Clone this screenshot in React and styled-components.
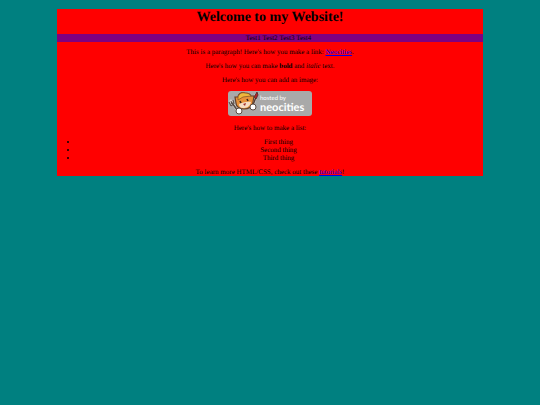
import React from 'react';
import styled, { createGlobalStyle } from 'styled-components';

const things = ['First thing', 'Second thing', 'Third thing'];
const tests = ['Test1', 'Test2', 'Test3', 'Test4'];

const NeocitiesBadge = () => {
  return (
    <Badge viewBox='0 0 84 25' role='img' aria-label='hosted by neocities'>
      <rect width='84' height='25' rx='3' fill='#a9a9a9' />
      {/* fork */}
      <path d='M3 10 L10 20' stroke='#d8d4d0' strokeWidth='3' strokeLinecap='round' />
      <path d='M4 12 L10 20' stroke='#574a45' strokeWidth='1.6' strokeLinecap='round' />
      <path d='M1 11 L3 15 L6 13 L5 9 M3 10 L4 13' fill='none' stroke='#574a45' strokeWidth='1' />
      {/* brush */}
      <path d='M28 4 L25 14' stroke='#d8d4d0' strokeWidth='3' strokeLinecap='round' />
      <path d='M28 6 L25 14' stroke='#584038' strokeWidth='1.6' />
      <path d='M29 1 L26 6 L28 8 L30 4 Z' fill='#b5232b' stroke='#4d2425' strokeWidth='0.8' />
      {/* cat */}
      <path
        d='M7 6 L10 6 C10 3 13 1 17 2 C20 2 22 3 23 5 L26 5 L25 11 C25 16 20 18 16 18 C12 18 8 16 8 12 Z'
        fill='#e8913a'
        stroke='#63412c'
        strokeWidth='1.2'
      />
      <path d='M10 7 C10 3 14 1 17 2 C20 2 22 3 23 5 L15 6 L10 9 Z' fill='#eeb73c' stroke='#8a5524' strokeWidth='0.8' />
      <path d='M11 13 C13 12 20 10 23 11 C22 16 18 17 15 17 C12 17 11 15 11 13 Z' fill='#f6dcc4' />
      <path d='M12 10 L13 12 M19 8 L20 10' stroke='#38231a' strokeWidth='1.6' />
      <path d='M15 13 L18 12 L17 15 Z' fill='#a32c2d' />
      <ellipse cx='11' cy='20' rx='3' ry='3' fill='#fff' stroke='#5c4b42' strokeWidth='1' />
      <ellipse cx='25' cy='16' rx='3' ry='3' fill='#fff' stroke='#5c4b42' strokeWidth='1' />
      <text x='32' y='9' fontSize='6'>
        hosted by
      </text>
      <text x='32' y='20' fontSize='11' fontWeight='700'>
        neocities
      </text>
    </Badge>
  );
};

const App = () => {
  return (
    <>
      <GlobalStyle />
      <Container>
        <Title>Welcome to my Website!</Title>
        <Nav>
          <NavList>
            {tests.map((test) => (
              <NavItem key={test}>{test} </NavItem>
            ))}
          </NavList>
        </Nav>
        <Paragraph>
          This is a paragraph! Here's how you make a link:{' '}
          <Link href='https://neocities.org'>Neocities</Link>.
        </Paragraph>
        <Paragraph>
          Here's how you can make <strong>bold</strong> and <em>italic</em> text.
        </Paragraph>
        <Paragraph>Here's how you can add an image:</Paragraph>
        <NeocitiesBadge />
        <Paragraph>Here's how to make a list:</Paragraph>
        <List>
          {things.map((thing) => (
            <li key={thing}>{thing}</li>
          ))}
        </List>
        <Paragraph>
          To learn more HTML/CSS, check out these{' '}
          <Link href='https://neocities.org/tutorials'>tutorials</Link>!
        </Paragraph>
      </Container>
    </>
  );
};

const GlobalStyle = createGlobalStyle`
  body {
    margin: 9px 4px;
    background: teal;
    color: black;
    font-family: 'Liberation Serif', 'Times New Roman', serif;
    font-size: 7px;
    line-height: 8px;
    text-rendering: geometricPrecision;
  }
`;

const Container = styled.div`
  width: 80%;
  margin: 0 auto;
  background: red;
  text-align: center;
`;

const Title = styled.h1`
  margin: 0 0 8px;
  font-size: 14px;
  line-height: 17px;
`;

const Nav = styled.nav`
  margin-bottom: 6px;
  background: purple;
`;

const NavList = styled.ul`
  margin: 0;
  padding-left: 17px;
  list-style: none;
`;

const NavItem = styled.li`
  display: inline;
`;

const Paragraph = styled.p`
  margin: 6px 0;

  &:last-child {
    margin-bottom: 0;
  }
`;

const Link = styled.a`
  color: #0000ee;
`;

const Badge = styled.svg`
  display: block;
  width: 84px;
  height: 25px;
  margin: 7px auto 8px;

  text {
    fill: white;
    font-family: Lato, sans-serif;
  }
`;

const List = styled.ul`
  margin: 6px 0;
  padding: 0 4px 0 21px;
`;

export default App;
